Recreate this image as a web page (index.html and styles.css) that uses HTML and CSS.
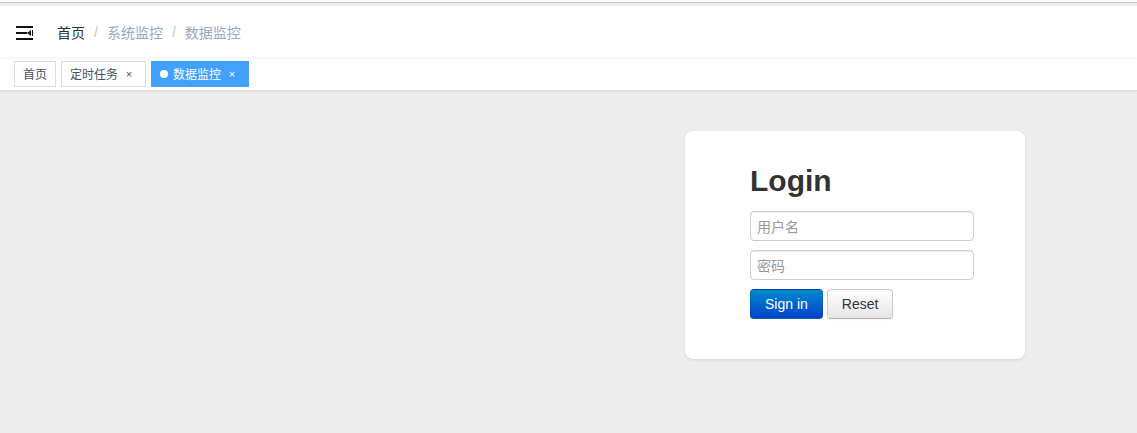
FILE: index.html
```html
<!DOCTYPE html>
<html lang="zh-CN">
<head>
<meta charset="utf-8">
<title>数据监控</title>
<link rel="stylesheet" href="styles.css">
</head>
<body>
<div class="topline"></div>
<header class="navbar">
  <div class="hamburger">
    <svg width="17" height="14" viewBox="0 0 17 14" aria-hidden="true">
      <rect x="0" y="0" width="17" height="2" fill="#111"/>
      <rect x="0" y="6" width="11" height="2" fill="#111"/>
      <polygon points="11,7 15,4 15,10" fill="#111"/>
      <rect x="16" y="4" width="1" height="6" fill="#111"/>
      <rect x="0" y="12" width="17" height="2" fill="#111"/>
    </svg>
  </div>
  <nav class="breadcrumb">
    <span class="crumb crumb-home">首页</span>
    <span class="sep">/</span>
    <span class="crumb">系统监控</span>
    <span class="sep">/</span>
    <span class="crumb">数据监控</span>
  </nav>
</header>
<div class="tags">
  <span class="tag">首页</span>
  <span class="tag">定时任务<span class="close">×</span></span>
  <span class="tag tag-active"><span class="dot"></span>数据监控<span class="close">×</span></span>
</div>
<main class="main">
  <form class="card">
    <h2 class="title">Login</h2>
    <input class="field" type="text" placeholder="用户名">
    <input class="field" type="password" placeholder="密码">
    <div class="actions">
      <button type="button" class="btn btn-primary">Sign in</button>
      <button type="button" class="btn btn-default">Reset</button>
    </div>
  </form>
</main>
</body>
</html>
```
FILE: styles.css
```css
html, body {
  margin: 0;
  padding: 0;
}
body {
  background: #ededed;
  font-family: "Liberation Sans", "Noto Sans CJK SC", sans-serif;
  height: 433px;
  overflow: hidden;
}
.topline {
  height: 7px;
  background: linear-gradient(to bottom, #fff 0, #fff 2px, #cdcdcd 2px, #cdcdcd 3px, #eeeeee 3px, #eeeeee 6px, #fff 6px);
}
.navbar {
  height: 50px;
  background: #fff;
  display: flex;
  align-items: center;
  box-shadow: 0 1px 4px rgba(0, 21, 41, 0.06);
  position: relative;
  z-index: 2;
}
.hamburger {
  padding-left: 16px;
  width: 17px;
  height: 14px;
  display: flex;
  margin-top: 1px;
}
.breadcrumb {
  margin-left: 24px;
  font-family: "Noto Sans CJK SC", "Liberation Sans", sans-serif;
  font-size: 14px;
  color: #97a8be;
  display: flex;
  align-items: center;
}
.crumb-home {
  color: #303133;
}
.sep {
  margin: 0 9px;
  color: #c0c4cc;
  font-family: "Liberation Sans", sans-serif;
}
.tags {
  height: 33px;
  background: #fff;
  border-bottom: 1px solid #d8dce5;
  box-shadow: 0 1px 3px 0 rgba(0, 0, 0, 0.06);
  display: flex;
  align-items: flex-start;
  padding-left: 14px;
  position: relative;
  z-index: 1;
}
.tag {
  margin-top: 4px;
  height: 24px;
  line-height: 24px;
  border: 1px solid #d8dce5;
  color: #495060;
  background: #fff;
  padding: 0 8px;
  font-family: "Noto Sans CJK SC", "Liberation Sans", sans-serif;
  font-size: 12px;
  display: flex;
  align-items: center;
  margin-right: 5px;
}
.tag-active {
  background: #42a0ff;
  border-color: #42a0ff;
  color: #fff;
}
.dot {
  width: 8px;
  height: 8px;
  border-radius: 50%;
  background: #fff;
  margin-right: 5px;
}
.close {
  width: 16px;
  margin-left: 3px;
  text-align: center;
  font-family: "Liberation Sans", sans-serif;
  font-size: 11px;
}
.main {
  padding-top: 40px;
  padding-left: 685px;
}
.card {
  width: 340px;
  height: 228px;
  box-sizing: border-box;
  background: #fff;
  border-radius: 8px;
  box-shadow: 0 1px 3px rgba(0, 0, 0, 0.1);
  padding: 30px 0 0 65px;
  margin: 0;
}
.title {
  margin: 0 0 10px;
  font-family: "Liberation Sans", sans-serif;
  font-weight: bold;
  font-size: 30px;
  line-height: 40px;
  color: #333;
}
.field {
  display: block;
  box-sizing: border-box;
  width: 224px;
  height: 30px;
  padding: 4px 6px;
  margin: 0 0 9px;
  border: 1px solid #ccc;
  border-radius: 4px;
  font-family: "Noto Sans CJK SC", "Liberation Sans", sans-serif;
  font-size: 14px;
  color: #555;
  box-shadow: inset 0 1px 1px rgba(0, 0, 0, 0.075);
  outline: none;
}
.field::placeholder {
  color: #999;
}
.actions {
  display: flex;
  gap: 4px;
}
.btn {
  height: 30px;
  padding: 0 14px;
  border-radius: 4px;
  font-family: "Liberation Sans", sans-serif;
  font-size: 14px;
  line-height: 28px;
  cursor: pointer;
}
.btn-primary {
  color: #fff;
  background: linear-gradient(to bottom, #0088cc, #0044cc);
  border: 1px solid #0044cc;
  border-color: rgba(0, 0, 0, 0.1) rgba(0, 0, 0, 0.1) rgba(0, 0, 0, 0.25);
}
.btn-default {
  color: #333;
  background: linear-gradient(to bottom, #ffffff, #e6e6e6);
  border: 1px solid #cccccc;
  border-bottom-color: #b3b3b3;
  box-shadow: inset 0 1px 0 rgba(255, 255, 255, 0.2), 0 1px 2px rgba(0, 0, 0, 0.05);
}
```
